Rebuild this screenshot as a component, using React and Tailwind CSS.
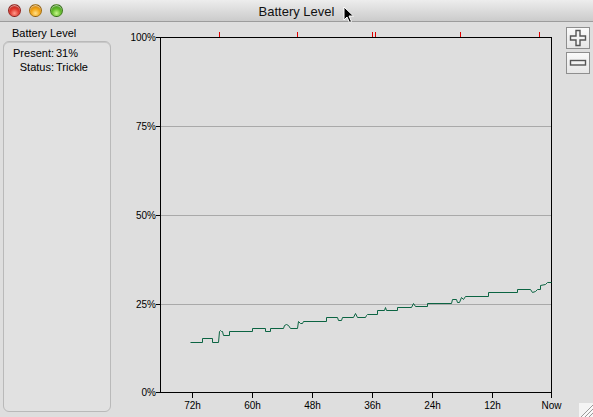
import React from 'react';

const Y_TICKS = [
  { y: 37, label: '100%' },
  { y: 126, label: '75%' },
  { y: 215, label: '50%' },
  { y: 304, label: '25%' },
  { y: 392, label: '0%' },
];

const X_TICKS = [
  { x: 192, label: '72h' },
  { x: 252, label: '60h' },
  { x: 312, label: '48h' },
  { x: 372, label: '36h' },
  { x: 432, label: '24h' },
  { x: 492, label: '12h' },
  { x: 551, label: 'Now' },
];

const RED_MARKS = [219, 297, 372, 375, 460, 539];

// battery history, page coordinates (stepped trace)
const TRACE =
  '190,342 202,342 202,338 212,338 212,342 218,342 219,331 220,330 221,331 222,331 223,335 229,335 229,331 252,331 252,328 265,328 265,331 270,331 270,328 283,328 284,325 286,324 288,325 290,328 297,328 298,321 300,323 302,323 303,321 326,321 326,317 337,317 338,320 341,320 342,317 353,317 355,313 357,317 365,317 366,315 367,314 377,314 377,310 384,310 385,307 386,310 397,310 397,307 411,307 413,303 415,306 427,306 427,303 451,303 452,299 456,299 457,302 459,302 461,297 463,299 465,296 488,296 488,292 517,292 517,289 530,289 532,292 535,291 537,289 540,289 540,285 545,284 547,282 551,282';

function Light({ className }) {
  return (
    <div className={`w-[13px] h-[13px] rounded-full border border-black/30 shadow-[inset_0_1px_1px_rgba(255,255,255,0.6)] ${className}`} />
  );
}

function Chart() {
  return (
    <svg width="450" height="395" className="shrink-0" style={{ fontFamily: '"Liberation Sans", Arial, sans-serif' }}>
      <g transform="translate(-115,-22)">
        {RED_MARKS.map((x) => (
          <rect key={x} x={x} y={32} width={1} height={5} fill="#e00000" />
        ))}
        {[126, 215, 304].map((y) => (
          <rect key={y} x={161} y={y} width={390} height={1} fill="#a9a9a9" />
        ))}
        <rect x={160} y={37} width={392} height={1} fill="#000" />
        <rect x={160} y={392} width={392} height={1} fill="#000" />
        <rect x={160} y={37} width={1} height={356} fill="#000" />
        <rect x={551} y={37} width={1} height={356} fill="#000" />
        {Y_TICKS.map((t) => (
          <g key={t.label}>
            <rect x={156} y={t.y} width={4} height={1} fill="#000" />
            <text x={156} y={t.y + 4} textAnchor="end" fontSize="10" fill="#000">
              {t.label}
            </text>
          </g>
        ))}
        {X_TICKS.map((t) => (
          <g key={t.label}>
            <rect x={t.x} y={393} width={1} height={5} fill="#000" />
            <text x={t.x + 0.5} y={409} textAnchor="middle" fontSize="10" fill="#000">
              {t.label}
            </text>
          </g>
        ))}
      </g>
      <g transform="translate(-114.5,-21.5)">
        <polyline points={TRACE} fill="none" stroke="#0b6442" strokeWidth="1" strokeLinejoin="miter" />
      </g>
    </svg>
  );
}

export default function App() {
  return (
    <div className="w-[593px] h-[417px] bg-[#dedede] flex flex-col overflow-hidden relative font-['Liberation_Sans',Arial,sans-serif] text-black select-none">
      {/* title bar */}
      <div className="h-[22px] shrink-0 flex items-center border-b border-[#9c9c9c] bg-gradient-to-b from-[#ededed] via-[#dcdcdc] to-[#cbcbcb]">
        <div className="w-[90px] flex items-center gap-[8px] pl-[8px]">
          <Light className="bg-[radial-gradient(circle_at_50%_75%,#ff9c8c_0%,#e0382e_45%,#a0160f_100%)]" />
          <Light className="bg-[radial-gradient(circle_at_50%_75%,#ffe08a_0%,#f3a516_45%,#b06a06_100%)]" />
          <Light className="bg-[radial-gradient(circle_at_50%_75%,#c9f78c_0%,#62bb2a_45%,#2f7a10_100%)]" />
        </div>
        <div className="flex-1 text-center text-[13px] leading-none text-[#111] pt-[1px]">Battery Level</div>
        <div className="w-[90px]" />
      </div>

      {/* body */}
      <div className="flex flex-1 min-h-0">
        <div className="w-[115px] shrink-0 flex flex-col pl-[3px] pt-[4px] pb-[5px]">
          <div className="h-[15px] pl-[9px] text-[11px] leading-[15px]">Battery Level</div>
          <div className="flex-1 w-[108px] rounded-[6px] border border-[#b9b9b9] bg-[#e1e1e1] shadow-[inset_0_1px_0_#c8c8c8] pt-[4px] text-[11px] leading-[14px]">
            <div className="grid grid-cols-[50px_auto] gap-x-[2px]">
              <span className="text-right">Present:</span>
              <span>31%</span>
              <span className="text-right">Status:</span>
              <span>Trickle</span>
            </div>
          </div>
        </div>

        <Chart />

        <div className="flex flex-col gap-[3px] pt-[5px] pl-[1px]">
          <button className="w-[24px] h-[22px] flex items-center justify-center border border-[#8e8e8e] bg-gradient-to-b from-[#fafafa] to-[#e6e6e6]">
            <svg width="18" height="18" viewBox="0 0 18 18">
              <path d="M7 1.5h4v5.5h5.5v4H11v5.5H7V11H1.5V7H7z" fill="#f2f2f2" stroke="#555" strokeWidth="1.4" />
            </svg>
          </button>
          <button className="w-[24px] h-[22px] flex items-center justify-center border border-[#8e8e8e] bg-gradient-to-b from-[#fafafa] to-[#e6e6e6]">
            <svg width="18" height="8" viewBox="0 0 18 8">
              <rect x="1.5" y="1.5" width="15" height="4.5" fill="#f2f2f2" stroke="#555" strokeWidth="1.4" />
            </svg>
          </button>
        </div>
      </div>

      {/* resize grip */}
      <svg width="14" height="14" className="absolute right-0 bottom-0">
        <rect width="14" height="14" fill="#f4f4f4" />
        <path d="M14 2L2 14M14 6L6 14M14 10L10 14" stroke="#9a9a9a" strokeWidth="1" />
        <path d="M14 3.5L3.5 14M14 7.5L7.5 14" stroke="#ffffff" strokeWidth="1" />
      </svg>

      {/* mouse pointer */}
      <svg width="12" height="18" viewBox="0 0 12 18" className="absolute left-[343px] top-[6px]">
        <path d="M1 1v13l3-3 2.5 5.5 2-1L6 10h4.5z" fill="#000" stroke="#fff" strokeWidth="1" />
      </svg>
    </div>
  );
}
